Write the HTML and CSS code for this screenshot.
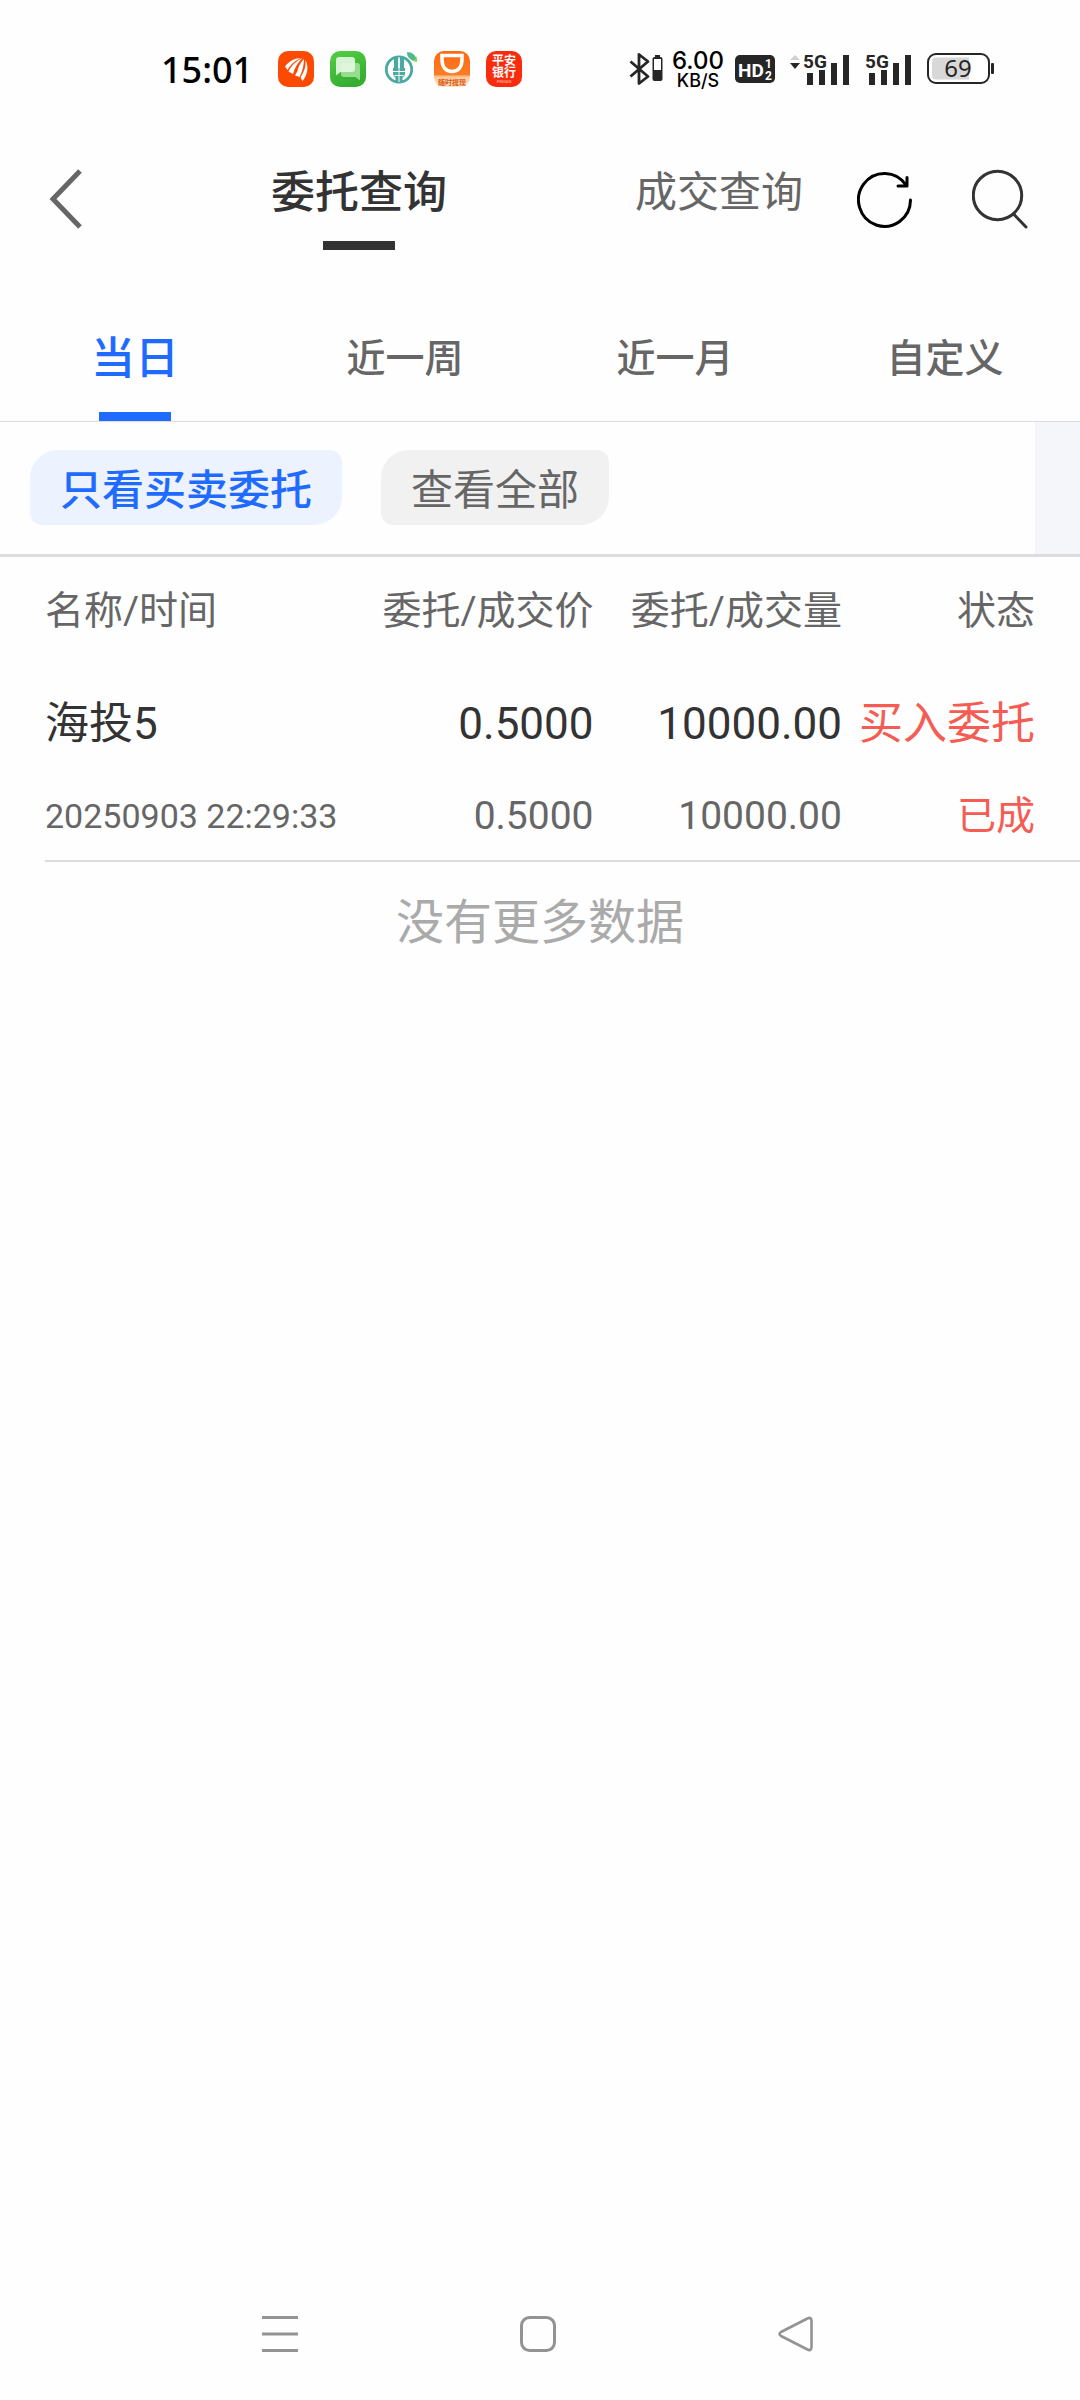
FILE: index.html
```html
<!DOCTYPE html>
<html lang="zh-CN">
<head>
<meta charset="utf-8">
<meta name="viewport" content="width=device-width, initial-scale=1">
<title>委托查询</title>
<link rel="stylesheet" href="styles.css">
</head>
<body>
<div class="status-bar">
  <div class="status-left">
    <time class="clock">15:01</time>
    <div class="notifications">
      <svg width="36" height="36" viewBox="0 0 36 36" aria-hidden="true">
        <rect width="36" height="36" rx="10" fill="#fc4a03"/>
        <path d="M22.500 7C16 7.500 10.500 10.500 7 15.500L9.500 19C12 14 16.500 10 22.500 7Z" fill="#fff"/>
        <path d="M24.500 7C18 10 13 15 10.500 20.500L15 23C16.500 17.500 19.500 11.500 24.500 7Z" fill="#fff"/>
        <path d="M26 8C22 12 20 16.500 19.500 20L17 24.500L21.500 26C24.500 20.500 26 14 26 8Z" fill="#fff"/>
        <path d="M27.500 9C28 15 26.500 20.500 22.500 26.500L24.500 30C29.500 24 31 16 27.500 9Z" fill="#fff"/>
      </svg>
      <svg width="36" height="36" viewBox="0 0 36 36" aria-hidden="true">
        <defs>
          <linearGradient id="msg" x1="0" y1="0" x2="0.400" y2="1"><stop offset="0" stop-color="#52cf45"/><stop offset="1" stop-color="#36ad31"/></linearGradient>
        </defs>
        <rect width="36" height="36" rx="10" fill="url(#msg)"/>
        <path d="M14 12H27a3 3 0 0 1 3 3V29.500L25.500 26H14a3 3 0 0 1-3-3V15a3 3 0 0 1 3-3Z" fill="#96dd90"/>
        <path d="M9 6H22a3 3 0 0 1 3 3V18a3 3 0 0 1-3 3H10.500L6 24.500V9a3 3 0 0 1 3-3Z" fill="#e4f7e1" fill-opacity=".92"/>
      </svg>
      <svg width="36" height="36" viewBox="0 0 36 36" aria-hidden="true">
        <circle cx="17" cy="18.500" r="12.700" fill="none" stroke="#4aa9a1" stroke-width="2.800"/>
        <path d="M12 6.500h4.200v11.500h-4.200zM17.800 6.500h4.200v11.500h-4.200zM11 17h12v5.500c0 2-1.500 3.500-2.500 4v4h-7v-4c-1-.5-2.500-2-2.500-4z" fill="#4aa9a1"/>
        <path d="M17 6V31M11 20.500h12M12.500 24.500h9" stroke="#fff" stroke-width="1"/>
        <path d="M25 1C30 1 34 4 35 10C29 10 25 7 25 1Z" fill="#52b98d"/>
        <path d="M29 9.500C32 9.500 34 8 35 5V11Z" fill="#86dc42"/>
      </svg>
      <svg width="36" height="36" viewBox="0 0 36 36" aria-hidden="true">
        <defs>
          <linearGradient id="didi" x1="0" y1="0" x2="0" y2="1"><stop offset="0" stop-color="#ff6810"/><stop offset=".65" stop-color="#fb7c25"/><stop offset=".72" stop-color="#fdc99c"/><stop offset="1" stop-color="#ffe2c4"/></linearGradient>
        </defs>
        <rect width="36" height="36" rx="10" fill="url(#didi)"/>
        <path d="M8 4.500H28V8.500C28 16 24 20.500 18 20.500C12 20.500 8 16 8 8.500Z" fill="none" stroke="#fff" stroke-width="3.600"/>
        <text class="promo" x="18" y="34" text-anchor="middle">随时提现</text>
      </svg>
      <svg width="36" height="36" viewBox="0 0 36 36" aria-hidden="true">
        <rect width="36" height="36" rx="10" fill="#fb2c0e"/>
        <text class="bank" x="18" y="14" text-anchor="middle">平安</text>
        <text class="bank" x="18" y="26" text-anchor="middle">银行</text>
        <text class="bank-latin" x="18" y="32" text-anchor="middle">PINGAN</text>
      </svg>
    </div>
  </div>
  <div class="status-right">
    <svg width="34" height="34" viewBox="0 0 34 34" aria-hidden="true">
      <path d="M1.500 9.500L19 24.500L10 31.500V2.500L19 9.500L1.500 24.500" fill="none" stroke="#262626" stroke-width="2.800" stroke-linejoin="round"/>
      <rect x="23.500" y="5" width="10" height="24" rx="2" fill="#262626"/>
      <rect x="26" y="3" width="5" height="2" fill="#262626"/>
      <rect x="25" y="7" width="7" height="11" fill="#fff"/>
    </svg>
    <div class="speed"><span class="speed-value">6.00</span><span class="speed-unit">KB/S</span></div>
    <svg width="40" height="28" viewBox="0 0 40 28" aria-hidden="true">
      <rect width="40" height="28" rx="5" fill="#262626"/>
      <text class="hd" x="3" y="22">HD</text>
      <text class="sim" x="30" y="13">1</text>
      <text class="sim" x="30" y="25">2</text>
    </svg>
    <svg width="60" height="34" viewBox="0 0 60 34" aria-hidden="true">
      <path d="M0 8L5 3L10 8Z" fill="#d0d0d0"/>
      <path d="M0 11H10L5 17Z" fill="#262626"/>
      <text class="net" x="13" y="16">5G</text>
      <path d="M17 21h6v12h-6zM29 18h6v15h-6zM41 11h6v22h-6zM53 3h6v30h-6z" fill="#262626"/>
    </svg>
    <svg width="47" height="34" viewBox="0 0 47 34" aria-hidden="true">
      <text class="net" x="0" y="16">5G</text>
      <path d="M4 21h6v12h-6zM16 18h6v15h-6zM28 11h6v22h-6zM40 3h6v30h-6z" fill="#262626"/>
    </svg>
    <svg width="68" height="32" viewBox="0 0 68 32" aria-hidden="true">
      <rect x="1" y="1" width="61" height="29" rx="8" fill="#fff" stroke="#262626" stroke-width="2"/>
      <path d="M9 4.500H42V26.500H9A4 4 0 0 1 5 22.500V8.500A4 4 0 0 1 9 4.500Z" fill="#d8d8d8"/>
      <rect x="64" y="10" width="3" height="11" rx="1" fill="#262626"/>
      <text class="charge" x="31" y="24" text-anchor="middle">69</text>
    </svg>
  </div>
</div>

<header class="app-header">
  <button class="icon-button back" type="button" aria-label="返回">
    <svg width="34" height="60" viewBox="0 0 34 60"><path d="M31 2L4 30L31 58" fill="none" stroke="#666" stroke-width="5"/></svg>
  </button>
  <button class="page-tab is-active" type="button">委托查询</button>
  <button class="page-tab" type="button">成交查询</button>
  <div class="actions">
    <button class="icon-button" type="button" aria-label="刷新">
      <svg width="56" height="60" viewBox="0 0 56 60"><path d="M53.500 31A26 26.500 0 1 1 49 16M50 8.500V17H41" fill="none" stroke="#000" stroke-width="3" stroke-linecap="round" stroke-linejoin="round"/></svg>
    </button>
    <button class="icon-button" type="button" aria-label="搜索">
      <svg width="56" height="60" viewBox="0 0 56 60"><circle cx="25.500" cy="26.500" r="24.200" fill="none" stroke="#333" stroke-width="3"/><path d="M42 45.500L54 58" stroke="#333" stroke-width="3" stroke-linecap="round"/></svg>
    </button>
  </div>
</header>

<nav class="range-tabs" aria-label="查询区间">
  <button class="range-tab is-active" type="button">当日</button>
  <button class="range-tab" type="button">近一周</button>
  <button class="range-tab" type="button">近一月</button>
  <button class="range-tab" type="button">自定义</button>
</nav>

<main>
  <div class="filters">
    <div class="pills">
      <button class="pill is-active" type="button">只看买卖委托</button>
      <button class="pill" type="button">查看全部</button>
    </div>
  </div>
  <table class="orders">
    <thead>
      <tr><th scope="col" class="col-name">名称/时间</th><th scope="col" class="col-price">委托/成交价</th><th scope="col" class="col-volume">委托/成交量</th><th scope="col" class="col-state">状态</th></tr>
    </thead>
    <tbody>
      <tr class="primary"><td>海投5</td><td>0.5000</td><td>10000.00</td><td class="buy">买入委托</td></tr>
      <tr class="secondary"><td class="stamp">20250903 22:29:33</td><td>0.5000</td><td>10000.00</td><td class="buy">已成</td></tr>
    </tbody>
  </table>
  <p class="end-note">没有更多数据</p>
</main>

<footer class="system-nav">
  <button class="icon-button" type="button" aria-label="最近任务">
    <svg width="36" height="36" viewBox="0 0 36 36"><path d="M0 1.500H36M0 18H36M0 34.500H36" stroke="#939393" stroke-width="3"/></svg>
  </button>
  <button class="icon-button" type="button" aria-label="主屏幕">
    <svg width="36" height="36" viewBox="0 0 36 36"><rect x="1.500" y="1.500" width="33" height="33" rx="8" fill="none" stroke="#939393" stroke-width="3"/></svg>
  </button>
  <button class="icon-button" type="button" aria-label="返回上一级">
    <svg width="36" height="36" viewBox="0 0 36 36"><path d="M29.500 2.500Q33.500 0.500 33.500 5V31Q33.500 35.500 29.500 33.500L3 20Q0 18 3 16Z" fill="none" stroke="#939393" stroke-width="2.600" stroke-linejoin="round"/></svg>
  </button>
</footer>
</body>
</html>
```
FILE: styles.css
```css
* {
  box-sizing: border-box;
}

body {
  margin: 0;
  min-height: 100vh;
  display: flex;
  flex-direction: column;
  background: #fefefe;
  color: #333;
  font-family: Roboto, "Noto Sans CJK SC", sans-serif;
}

button {
  margin: 0;
  padding: 0;
  border: 0;
  background: none;
  color: inherit;
  font: inherit;
  white-space: nowrap;
}

svg {
  display: block;
}

.icon-button {
  display: flex;
}

/* Status bar */
.status-bar {
  height: 138px;
  padding: 0 85px 0 161px;
  display: flex;
  justify-content: space-between;
}

.status-left,
.status-right {
  height: 138px;
  display: flex;
  align-items: center;
}

.clock {
  width: 117px;
  padding-top: 2px;
  color: #000;
  font: 500 36px/40px "Noto Sans", sans-serif;
}

.notifications {
  display: flex;
  gap: 16px;
}

.status-right {
  gap: 15px;
  color: #000;
  font-family: Inter, sans-serif;
}

.speed {
  width: 52px;
  margin: 0 -4px 0 -6px;
  padding-top: 4px;
  display: flex;
  flex-direction: column;
  align-items: center;
  font-weight: 500;
}

.speed-value {
  font-size: 24px;
  line-height: 20px;
}

.speed-unit {
  font-size: 18px;
  line-height: 20px;
}

.bank,
.promo {
  font-family: "Noto Sans CJK SC", sans-serif;
  font-weight: 700;
}

.bank {
  fill: #fff;
  font-size: 12px;
}

.bank-latin {
  fill: #ffc9bd;
  font-size: 4px;
}

.promo {
  fill: #d9570c;
  font-size: 7px;
}

.hd,
.sim,
.net {
  font-family: Roboto, sans-serif;
  font-weight: 700;
}

.hd {
  fill: #fff;
  font-size: 19px;
}

.sim {
  fill: #fff;
  font-size: 12px;
}

.net {
  fill: #262626;
  font-size: 19px;
}

.charge {
  fill: #262626;
  font-family: "Noto Sans", sans-serif;
  font-size: 24px;
}

/* Page header */
.app-header {
  height: 162px;
  padding: 0 52px 0 49px;
  display: grid;
  grid-template-columns: 88px 1fr 276px auto;
  align-items: start;
}

.back,
.actions {
  margin-top: 31px;
}

.actions {
  display: flex;
  gap: 59px;
}

.page-tab {
  height: 112px;
  padding-top: 23px;
  display: flex;
  flex-direction: column;
  align-items: center;
  color: #666;
  font-size: 42px;
  line-height: 64px;
}

.page-tab.is-active {
  color: #333;
  font-size: 44px;
  font-weight: 500;
}

.page-tab.is-active::after,
.range-tab.is-active::after {
  content: "";
  width: 72px;
  height: 9px;
  background: currentColor;
}

.page-tab.is-active::after {
  margin-top: 16px;
}

/* Date range */
.range-tabs {
  height: 122px;
  display: grid;
  grid-template-columns: repeat(4, 1fr);
  border-bottom: 1px solid #dcdcdc;
}

.range-tab {
  padding-top: 27px;
  display: flex;
  flex-direction: column;
  align-items: center;
  color: #666;
  font-size: 39px;
  font-weight: 500;
  line-height: 64px;
}

.range-tab.is-active {
  color: #1f6bff;
  font-size: 44px;
}

.range-tab.is-active::after {
  margin-top: 21px;
}

/* Filters */
.filters {
  padding-right: 45px;
  background: #f5f6fa;
  border-bottom: 3px solid #dcdcdc;
}

.pills {
  padding: 28px 30px 29px;
  display: flex;
  gap: 39px;
  background: #fefefe;
}

.pill {
  height: 75px;
  padding: 6px 30px 0;
  border-radius: 28px 12px;
  background: #f1f1f1;
  color: #666;
  font-size: 42px;
  line-height: 69px;
}

.pill.is-active {
  background: #ecf3ff;
  color: #1f6bff;
  font-weight: 500;
}

/* Order list */
.orders {
  width: calc(100% - 45px);
  margin-left: 45px;
  table-layout: fixed;
  border-collapse: collapse;
  border-bottom: 2px solid #dcdcdc;
  text-align: right;
  white-space: nowrap;
}

.orders th,
.orders td {
  padding: 0;
}

.orders th {
  height: 100px;
  color: #666;
  font-size: 39px;
  font-weight: 400;
}

.orders th:first-child,
.orders td:first-child {
  text-align: left;
}

.orders th:last-child,
.orders td:last-child {
  padding-right: 45px;
}

.col-name {
  width: 30%;
}

.col-price,
.col-state {
  width: 23%;
}

.col-volume {
  width: 24%;
}

.primary td {
  height: 133px;
  font-size: 44px;
  line-height: 64px;
}

.secondary td {
  height: 71px;
  color: #666;
  font-size: 39px;
  line-height: 52px;
  vertical-align: top;
}

.secondary .stamp {
  font-size: 34px;
}

.primary .buy,
.secondary .buy {
  color: #f55c53;
}

.end-note {
  margin: 27px 0 0;
  color: #aaa;
  font-size: 48px;
  line-height: 68px;
  text-align: center;
}

/* System navigation */
.system-nav {
  height: 132px;
  margin-top: auto;
  padding-right: 4px;
  display: flex;
  justify-content: center;
  align-items: center;
  gap: 222px;
}
```
